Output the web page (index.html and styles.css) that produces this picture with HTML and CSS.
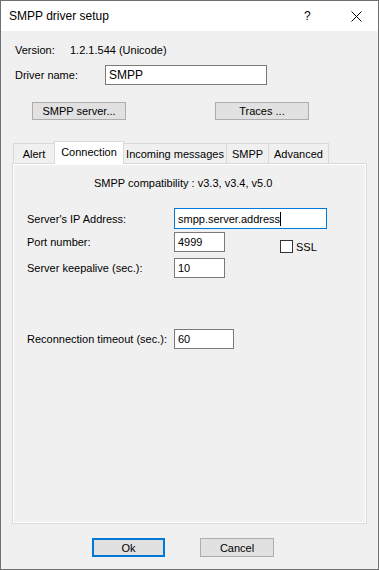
FILE: index.html
```html
<!DOCTYPE html>
<html>
<head>
    <title>SMPP driver setup</title>
    <link rel="stylesheet" href="styles.css">
</head>
<body>
    <div class="window">
        <div class="titlebar">
            <span class="title">SMPP driver setup</span>
            <span class="help">?</span>
            <span class="close">
                <svg width="11" height="11" viewBox="0 0 11 11">
                    <path d="M0.5 0.5 L10.5 10.5 M10.5 0.5 L0.5 10.5" stroke="#000" stroke-width="1" fill="none"/>
                </svg>
            </span>
        </div>

        <div class="dialog">
            <div class="row version-row">
                <span class="label-top">Version:</span>
                <span>1.2.1.544 (Unicode)</span>
            </div>
            <div class="row driver-row">
                <span class="label-top driver-label">Driver name:</span>
                <div class="field driver-field">SMPP</div>
            </div>
            <div class="row top-buttons">
                <div class="btn">SMPP server...</div>
                <div class="btn traces-btn">Traces ...</div>
            </div>

            <!-- Tab control -->
            <div class="tabs">
                <div class="tab tab-alert">Alert</div>
                <div class="tab tab-active">Connection</div>
                <div class="tab tab-incoming">Incoming messages</div>
                <div class="tab tab-smpp">SMPP</div>
                <div class="tab tab-advanced">Advanced</div>
            </div>
            <div class="panel">
                <div class="compat">SMPP compatibility : v3.3, v3.4, v5.0</div>

                <div class="form-row ip-row">
                    <span class="form-label">Server's IP Address:</span>
                    <div class="field field-focus ip-field">smpp.server.address<span class="caret"></span></div>
                </div>
                <div class="form-row port-row">
                    <span class="form-label">Port number:</span>
                    <div class="field short-field">4999</div>
                    <div class="ssl">
                        <span class="checkbox"></span>
                        <span>SSL</span>
                    </div>
                </div>
                <div class="form-row keepalive-row">
                    <span class="form-label">Server keepalive (sec.):</span>
                    <div class="field short-field">10</div>
                </div>
                <div class="form-row reconnect-row">
                    <span class="form-label">Reconnection timeout (sec.):</span>
                    <div class="field reconnect-field">60</div>
                </div>
            </div>

            <div class="footer">
                <div class="btn btn-default">Ok</div>
                <div class="btn btn-cancel">Cancel</div>
            </div>
        </div>
    </div>
</body>
</html>
```

FILE: styles.css
```css
body {
    margin: 0;
    background: #f0f0f0;
    font-family: "Liberation Sans", Arial, sans-serif;
    font-size: 11px;
    color: #000;
}
.window {
    width: 377px;
    height: 568px;
    border: 1px solid #707070;
    background: #f0f0f0;
    display: flex;
    flex-direction: column;
}
.titlebar {
    height: 30px;
    background: white;
    display: flex;
    align-items: center;
    padding-left: 8px;
    font-size: 12px;
}
.title {
    flex: 1;
}
.help {
    width: 12px;
    margin-right: 35px;
}
.close {
    width: 11px;
    height: 11px;
    margin-right: 16px;
    display: flex;
}
.dialog {
    padding-left: 11px;
    padding-right: 11px;
}
.row {
    display: flex;
    align-items: center;
}
.version-row {
    margin-top: 12px;
    height: 14px;
    padding-left: 3px;
}
.label-top {
    width: 55px;
}
.driver-row {
    margin-top: 8px;
    padding-left: 3px;
}
.driver-label {
    width: 90px;
}
.field {
    box-sizing: border-box;
    height: 20px;
    border: 1px solid #7a7a7a;
    background: white;
    padding: 0 3px;
    display: flex;
    align-items: center;
}
.driver-field {
    width: 162px;
    font-size: 12px;
}
.top-buttons {
    margin-top: 17px;
    padding-left: 20px;
}
.btn {
    box-sizing: border-box;
    width: 94px;
    height: 18px;
    background: #e1e1e1;
    border: 1px solid #adadad;
    display: flex;
    align-items: center;
    justify-content: center;
}
.traces-btn {
    margin-left: 89px;
}
.tabs {
    margin-top: 22px;
    display: flex;
    align-items: flex-end;
    padding-left: 1px;
    height: 21px;
}
.tab {
    box-sizing: border-box;
    height: 20px;
    border: 1px solid #d9d9d9;
    border-bottom: none;
    background: #f0f0f0;
    display: flex;
    align-items: center;
    justify-content: center;
    padding-top: 1px;
}
.tab-alert {
    width: 42px;
}
.tab-active {
    width: 70px;
    height: 23px;
    margin-bottom: -1px;
    margin-left: -1px;
    background: white;
    position: relative;
    padding-top: 0;
    padding-bottom: 3px;
}
.tab-incoming {
    width: 104px;
    margin-left: -1px;
}
.tab-smpp {
    width: 43px;
    margin-left: -1px;
}
.tab-advanced {
    width: 61px;
    margin-left: -1px;
}
.panel {
    box-sizing: border-box;
    width: 355px;
    height: 361px;
    border: 1px solid #d9d9d9;
    box-shadow: inset 0 0 0 1px white;
    padding-left: 14px;
}
.compat {
    margin-top: 13px;
    height: 14px;
    padding-left: 67px;
}
.form-row {
    display: flex;
    align-items: center;
}
.form-label {
    width: 147px;
}
.ip-row {
    margin-top: 17px;
}
.ip-field {
    width: 153px;
    height: 21px;
    border-color: #0078d7;
}
.caret {
    display: inline-block;
    width: 1px;
    height: 14px;
    background: #000;
}
.port-row {
    margin-top: 3px;
    align-items: flex-start;
}
.port-row .form-label {
    line-height: 20px;
}
.short-field {
    width: 51px;
}
.ssl {
    margin-left: 55px;
    margin-top: 8px;
    display: flex;
    align-items: center;
    gap: 3px;
}
.checkbox {
    box-sizing: border-box;
    width: 13px;
    height: 13px;
    border: 1px solid #333;
    background: white;
}
.keepalive-row {
    margin-top: 5px;
}
.reconnect-row {
    margin-top: 51px;
}
.reconnect-field {
    width: 60px;
}
.footer {
    display: flex;
    margin-top: 14px;
    padding-left: 80px;
}
.btn-default {
    width: 73px;
    height: 19px;
    border: 2px solid #0078d7;
}
.btn-cancel {
    width: 74px;
    height: 19px;
    margin-left: 35px;
}
```
